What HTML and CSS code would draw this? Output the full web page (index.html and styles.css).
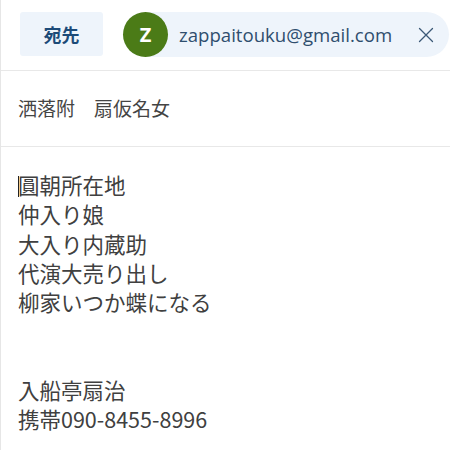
FILE: index.html
```html
<!DOCTYPE html>
<html lang="ja">
<head>
<meta charset="utf-8">
<link rel="stylesheet" href="styles.css">
</head>
<body>
<div class="compose">
  <div class="to-row">
    <button class="to-btn">宛先</button>
    <div class="chip">
      <span class="avatar">Z</span>
      <span class="email">zappaitouku@gmail.com</span>
      <svg class="close" width="16" height="16" viewBox="0 0 16 16"><path d="M1.5 1.5 L14.5 14.5 M14.5 1.5 L1.5 14.5" stroke="#3b5876" stroke-width="1.3" fill="none" stroke-linecap="round"/></svg>
    </div>
  </div>
  <div class="subject-row">洒落附　扇仮名女</div>
  <div class="body-text">
    <div class="line"><span class="caret"></span>圓朝所在地</div>
    <div class="line">仲入り娘</div>
    <div class="line">大入り内蔵助</div>
    <div class="line">代演大売り出し</div>
    <div class="line">柳家いつか蝶になる</div>
    <div class="line empty"></div>
    <div class="line empty"></div>
    <div class="line">入船亭扇治</div>
    <div class="line">携帯090-8455-8996</div>
  </div>
</div>
</body>
</html>
```
FILE: styles.css
```css
html, body {
  margin: 0;
  padding: 0;
  background: #ffffff;
}
.compose {
  width: 450px;
  height: 450px;
  border-left: 1px solid #e6e6e6;
  box-sizing: border-box;
  font-family: "Noto Sans CJK JP", "Noto Sans", sans-serif;
  overflow: hidden;
}
.to-row {
  height: 71px;
  border-bottom: 1.5px solid #e8e8e8;
  display: flex;
  align-items: flex-start;
  padding: 12px 0 0 19px;
  box-sizing: border-box;
  gap: 20px;
}
.to-btn {
  width: 83px;
  height: 44px;
  border: none;
  border-radius: 3px;
  background: #eef4fb;
  color: #1c4a78;
  font-family: "Noto Sans CJK JP", sans-serif;
  font-weight: 700;
  font-size: 18px;
  padding: 0;
}
.chip {
  display: flex;
  align-items: center;
  height: 45px;
  width: 326px;
  background: #eef4fb;
  border-radius: 23px;
  box-sizing: border-box;
}
.avatar {
  width: 45px;
  height: 45px;
  border-radius: 50%;
  background: #4b7b17;
  color: #ffffff;
  font-family: "Open Sans", "Noto Sans", sans-serif;
  font-weight: 700;
  font-size: 20px;
  display: flex;
  align-items: center;
  justify-content: center;
  flex: none;
}
.email {
  margin-left: 11px;
  font-family: "Open Sans", sans-serif;
  font-size: 18.6px;
  color: #2f4e6e;
  flex: 1;
}
.close {
  margin-right: 15px;
  flex: none;
}
.subject-row {
  height: 76px;
  border-bottom: 1.5px solid #e8e8e8;
  box-sizing: border-box;
  padding: 0 0 2px 17px;
  display: flex;
  align-items: center;
  font-size: 19px;
  color: #444444;
}
.body-text {
  padding: 23px 0 0 17px;
  font-size: 21.5px;
  line-height: 29.3px;
  color: #404040;
}
.line {
  height: 29.3px;
  white-space: nowrap;
}
.caret {
  display: inline-block;
  width: 1px;
  height: 21px;
  background: #222;
  vertical-align: -3px;
  margin-right: -1px;
}
```
